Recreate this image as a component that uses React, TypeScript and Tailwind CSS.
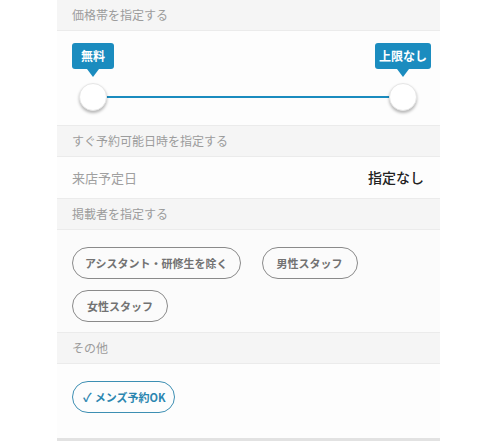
import React from "react";

const font = { fontFamily: '"Noto Sans CJK JP", "Noto Sans", sans-serif' };

function Header({ text, h }: { text: string; h: string }) {
  return (
    <div className={`${h} flex items-center bg-[#f5f5f5] border-b border-[#ebebeb] pl-[15px] text-[12px] text-[#9c9c9c]`}>
      {text}
    </div>
  );
}

function Thumb({ label }: { label: string }) {
  return (
    <div className="relative w-[28px] flex flex-col items-center">
      <div className="whitespace-nowrap h-[26px] min-w-[42px] px-[4px] rounded-[3px] bg-[#1b8cbf] text-white text-[12px] font-bold flex items-center justify-center">
        {label}
      </div>
      <div className="w-0 h-0 border-l-[6px] border-r-[6px] border-t-[8px] border-l-transparent border-r-transparent border-t-[#1b8cbf]" />
      <div className="mt-[6px] w-[28px] h-[28px] rounded-full bg-white border border-[#e6e6e6] shadow-[0_2px_3px_rgba(0,0,0,0.28)] z-10" />
    </div>
  );
}

function Chip({ text, px }: { text: string; px: string }) {
  return (
    <div className={`h-[32px] ${px} rounded-full border border-[#8a8a8a] flex items-center text-[11px] font-bold text-[#727272] whitespace-nowrap`}>
      {text}
    </div>
  );
}

export default function App() {
  return (
    <div className="w-[500px] h-[445px] bg-white overflow-hidden" style={font}>
      <div className="ml-[57px] w-[383px] flex flex-col">
        <Header text="価格帯を指定する" h="h-[31px]" />
        <div className="h-[95px] bg-[#fdfdfd] border-b border-[#ebebeb] flex items-end pl-[22px] pr-[23px] pb-[14px]">
          <Thumb label="無料" />
          <div className="flex-1 h-[2px] bg-[#1b8cbf] mb-[13px] -mx-[2px]" />
          <Thumb label="上限なし" />
        </div>
        <Header text="すぐ予約可能日時を指定する" h="h-[31px]" />
        <div className="h-[42px] bg-[#fdfdfd] border-b border-[#ebebeb] flex items-center justify-between pl-[15px] pr-[16px]">
          <span className="text-[13px] text-[#a0a0a0]">来店予定日</span>
          <span className="text-[14px] font-medium text-[#222]">指定なし</span>
        </div>
        <Header text="掲載者を指定する" h="h-[31px]" />
        <div className="h-[103px] bg-[#fbfbfb] border-b border-[#ebebeb] pl-[15px] pt-[17px] flex flex-col gap-[11px]">
          <div className="flex gap-[21px]">
            <Chip text="アシスタント・研修生を除く" px="px-[12px]" />
            <Chip text="男性スタッフ" px="px-[14px]" />
          </div>
          <div className="flex">
            <Chip text="女性スタッフ" px="px-[14px]" />
          </div>
        </div>
        <Header text="その他" h="h-[31px]" />
        <div className="h-[77px] bg-[#fdfdfd] pl-[15px] pt-[17px] border-b-[3px] border-[#e2e2e2]">
          <div className="inline-flex h-[32px] pl-[10px] pr-[9px] rounded-full border-[1.5px] border-[#3d8fb3] items-center text-[11px] font-bold text-[#2b86b0] whitespace-nowrap">
            <span className="mr-[3px] text-[12px] leading-none">✓</span>メンズ予約OK
          </div>
        </div>
      </div>
    </div>
  );
}
